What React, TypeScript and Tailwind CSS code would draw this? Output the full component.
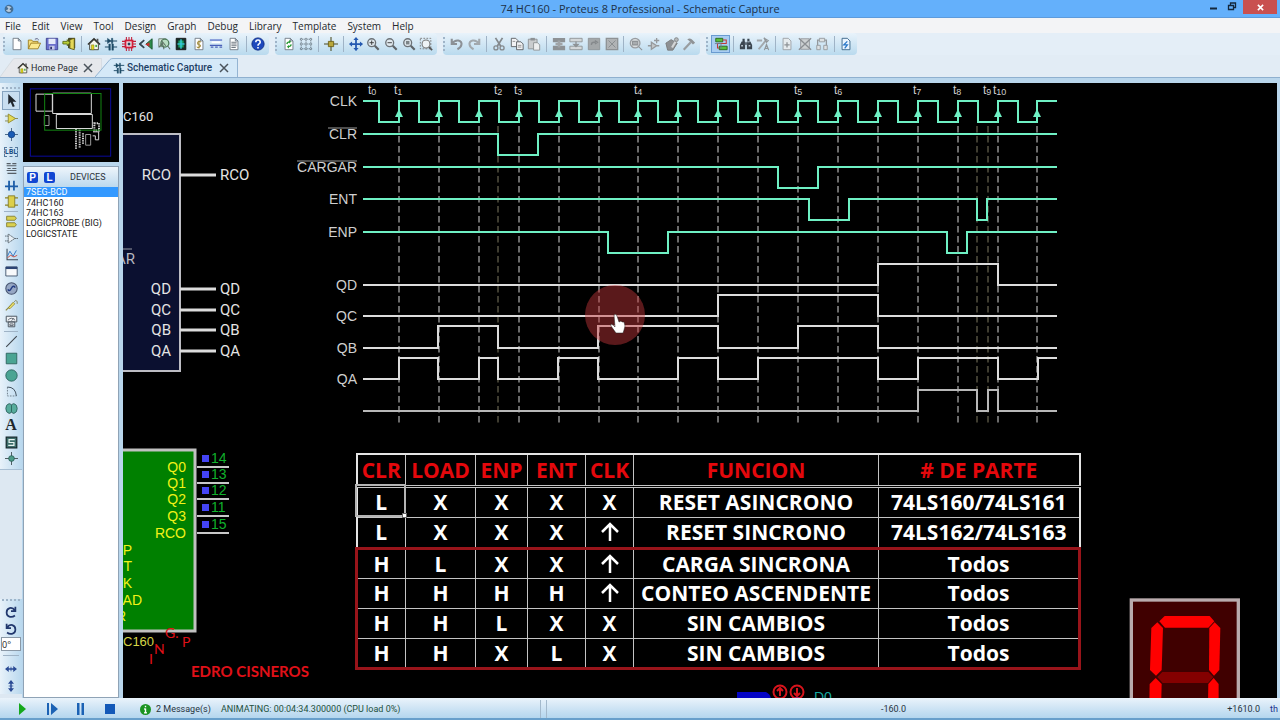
import React from 'react'
import type { ReactNode } from 'react'

const GREEN = '#6ff0c4'
const WHITE = '#dcdcdc'

/* ---------- small drawings, all on a 16x16 grid ---------- */

const page = <path d="M3.5 1.5h6l3 3v10h-9zM9.5 1.5v3h3" fill="#fff" stroke="#6d7680" />
const lens = <><circle cx="6.500" cy="6.500" r="4.500" fill="#dfe8ee" stroke="#6c7277" strokeWidth="1.500" /><path d="M10 10l4.500 4.500" stroke="#5f6468" strokeWidth="2.500" /></>
const house = (
    <>
        <path d="M3 8v6.500h10V8L8 3z" fill="#f7f7ea" stroke="#3a3a34" />
        <path d="M1 8.500L8 2l7 6.500" fill="none" stroke="#2d2d28" strokeWidth="1.500" />
        <path d="M11 2h2v4l-2-2z" fill="#555" />
        <path d="M5 9h3v5.500H5z" fill="#e0d61c" stroke="#6a6410" strokeWidth=".5" />
        <path d="M9.500 9h2v2.500h-2z" fill="#4aa84a" />
    </>
)
const schematic = (
    <g stroke="#1d4a66" fill="#1d4a66">
        <path d="M1 4.500h14M1 11.500h5M10 11.500h5" strokeWidth="1.200" />
        <path d="M4 1.500v6l4-3zM8.500 1.500h1.500v6H8.500zM5.500 8h1.800v7H5.500zM9 8h1.800v7H9z" strokeWidth=".5" />
    </g>
)

const icons: Record<string, ReactNode> = {
    new: page,
    open: <><path d="M1.500 13.500v-10h4l1 1.500h6v2" fill="#f5df7c" stroke="#9b7c1d" /><path d="M1.500 13.500l3-6.500h11l-3 6.500z" fill="#fbe98f" stroke="#9b7c1d" /><path d="M9 2.500q3-2 4.500 1" fill="none" stroke="#557" /></>,
    save: <><path d="M1.500 1.500h13v13h-13z" fill="#6b70cc" stroke="#383d8c" /><path d="M4 2h8v6H4z" fill="#e5eafa" /><path d="M5 10h6v4.500H5z" fill="#c7cbe8" /><path d="M6 11h2v3H6z" fill="#2d3170" /></>,
    exit: <><path d="M7.500 1.500h7v11h-7z" fill="#51532c" stroke="#333415" /><path d="M9 3l5-1.500v13L9 13z" fill="#e4d858" stroke="#5e5812" /><path d="M1 5h5V3l3 3.500-3 3.500V8H1z" fill="#b9cf38" stroke="#5a6a10" /></>,
    home: house,
    schematic,
    pcb: <><path d="M5 0v16M8 0v16M11 0v16M0 5h16M0 8h16M0 11h16" stroke="#c0203a" strokeWidth="1.200" /><path d="M3 3h10v10H3z" fill="#cf1d39" /><path d="M5 5h6v6H5z" fill="#f3e6ea" /><path d="M6.500 6.500h3v3h-3z" fill="#27455f" /></>,
    view3d: <><path d="M15 2v12L8 8z" fill="#2c8c4a" stroke="#16552a" /><path d="M6 3.500L1 8l5 4.500" fill="none" stroke="#34454f" strokeWidth="2" /><path d="M12 6v5L7 8.500z" fill="#c63030" /></>,
    gerber: <><path d="M2 2h8v9H2z" fill="#d6e6d9" stroke="#6c7d70" /><circle cx="9" cy="7" r="4.500" fill="#b8ddc2" stroke="#4e7a5b" strokeWidth="1.500" /><path d="M12 10l3 4M2 12l4-5 2 7M5 4l5 6" stroke="#5c6f62" fill="none" strokeWidth="1.200" /></>,
    design: <><path d="M2.500 1.500h11v13h-11z" fill="#152b26" stroke="#111" /><path d="M5 4h6v3H5zM5 9h6v3H5z" fill="#18a36a" /><path d="M8 2.500v11M4 8h8" stroke="#36d2e0" strokeWidth="1.500" /></>,
    bill: <>{page}<path d="M10 6q-1-1.500-2.500-1T6.500 8l2.500 1q1.500 1-.5 2.500T5.500 11M8 4v9" fill="none" stroke="#a08a38" strokeWidth="1.200" /></>,
    bus: <><path d="M1 3.500h14" stroke="#7a8fd4" strokeWidth="2" /><path d="M1 9.500h14M2 11.500h3M7 11.500h3M12 11.500h3" stroke="#4a60b8" strokeWidth="1.500" /><path d="M3 6h10" stroke="#fff" strokeWidth="2" /></>,
    notes: <>{page}<path d="M5 6h6M5 8h6M5 10h6M5 12h5" stroke="#5d6670" /></>,
    help: <><circle cx="8" cy="8" r="7" fill="#1e49bd" stroke="#0e2a80" /><path d="M5.500 6q0-2.500 2.500-2.500T10.500 6q0 1.200-1.300 1.900T8 10M8 11.500v1.500" fill="none" stroke="#fff" strokeWidth="1.800" /></>,
    redraw: <>{page}<path d="M5.500 8q.5-2.500 3-2.500M10.500 8.500q-.5 2.500-3 2.500" fill="none" stroke="#279a34" strokeWidth="1.500" /><path d="M8 3.500l2.500 2L8 7.500zM8 9l-2.500 2L8 13z" fill="#279a34" /></>,
    grid: <path d="M2.500 1v14M8 1v14M13.500 1v14M1 2.500h14M1 8h14M1 13.500h14" stroke="#4d5963" strokeDasharray="1.500 1" />,
    origin: <><path d="M8 0v16M0 8h16" stroke="#4b4b20" strokeWidth="1.200" /><path d="M5 5h6v6H5z" fill="#b9a73a" stroke="#6c6018" /></>,
    pan: <><path d="M8 1v14M1 8h14" stroke="#2559b0" strokeWidth="2" /><path d="M8 0l3 3.500H5zM8 16l3-3.500H5zM0 8l3.500-3v6zM16 8l-3.500-3v6z" fill="#2559b0" /></>,
    zoomIn: <>{lens}<path d="M4 6.500h5M6.500 4v5" stroke="#333" /></>,
    zoomOut: <>{lens}<path d="M4 6.500h5" stroke="#333" /></>,
    zoomAll: <>{lens}<path d="M4.500 4.500h4v4h-4z" fill="#7c8488" /></>,
    zoomArea: <><path d="M1.500 1.500h12v12h-12z" fill="none" stroke="#777" strokeDasharray="2 1.500" /><circle cx="8" cy="8" r="4.500" fill="#eef3f6" stroke="#777" strokeWidth="1.200" /><path d="M11.500 11.500l3.500 3.500" stroke="#555" strokeWidth="2" /></>,
    undo: <path d="M2 2v6h6M2.500 7.500q2.500-4 7-3.500 4.500 1 3.500 5-.5 3-4.500 5" fill="none" stroke="#8c9196" strokeWidth="2.400" />,
    redo: <path d="M14 2v6H8M13.500 7.500q-2.500-4-7-3.500-4.500 1-3.500 5 .5 3 4.500 5" fill="none" stroke="#a2a8ad" strokeWidth="2.400" />,
    cut: <><path d="M4 1l6 9.500M12 1L6 10.500" stroke="#84898d" strokeWidth="2" /><circle cx="4.500" cy="12.500" r="2.300" fill="none" stroke="#84898d" strokeWidth="1.500" /><circle cx="11.500" cy="12.500" r="2.300" fill="none" stroke="#84898d" strokeWidth="1.500" /></>,
    copy: <><path d="M1.500 1.500h5l2.500 2.500v7H1.500z" fill="#f2f3f5" stroke="#55595e" /><path d="M7.500 5.500h5l2.500 2.500v6.500H7.500z" fill="#f2f3f5" stroke="#55595e" /><path d="M9 9.500h4M9 11.500h4M3 5h3" stroke="#888" /></>,
    paste: <><path d="M1.500 2.500h10v11h-10z" fill="#c9ccce" stroke="#8d9194" /><path d="M4 1h5v3H4z" fill="#8d9194" /><path d="M7.500 6.500h4.500l2.500 2.500v6h-7z" fill="#eceeef" stroke="#8d9194" /></>,
    blockCopy: <><path d="M1 1h14v5H1zM1 10h14v5H1z" fill="#8e9295" /><path d="M8 4v8M4 8h8" stroke="#a0a4a7" strokeWidth="3" /></>,
    blockMove: <><path d="M1 1.500h14v4H1zM1 10.500h14v4H1z" fill="#d3d7d9" stroke="#8e9295" /><path d="M8 5v4M5.500 8.500h5L8 11z" stroke="#8e9295" strokeWidth="1.500" fill="#8e9295" /></>,
    blockRotate: <><path d="M1.500 1.500h13v13h-13z" fill="#a3a7a9" stroke="#8e9295" /><path d="M5 9q0-3 3-3h2M9 4l3 2-3 2" stroke="#85898c" fill="none" strokeWidth="1.500" /></>,
    blockDelete: <><path d="M1.500 1.500h13v13h-13z" fill="#b0b3b5" stroke="#8e9295" strokeWidth="1.500" /><path d="M4 4l8 8M12 4l-8 8" stroke="#85898c" /></>,
    pick: <><circle cx="7" cy="7" r="5.500" fill="#d8dcde" stroke="#989ca0" strokeWidth="1.500" /><path d="M4 5h6v4H4zM11 11l4 4" fill="#a8acaf" stroke="#8f9396" strokeWidth="1.200" /></>,
    make: <path d="M1 10h4M10 10h4M5 6v8l6-4zM11 1v6M8 4h6" fill="#c4c8ca" stroke="#96999c" strokeWidth="1.500" />,
    pack: <><path d="M1 7l6-4 7 4-5 8H3z" fill="#8d9093" stroke="#777" /><path d="M8 12L14 2" stroke="#d3d5d6" strokeWidth="2.500" /><circle cx="13" cy="3" r="2.200" fill="#b5b8ba" stroke="#808386" /></>,
    hammer: <><path d="M2 14.500L10 6" stroke="#999da0" strokeWidth="2.500" /><path d="M6 2.500q4-2 6 1l3 3-2.500 2L10 6z" fill="#8f9396" /></>,
    wire: <><path d="M2 1.500h8v4H2zM6 10.500h9v4H6z" fill="#59c03a" stroke="#276418" /><path d="M10 3.500h4v4H4v5h2" fill="none" stroke="#c03a3a" strokeWidth="1.200" /><path d="M1 7.500h7v6" fill="none" stroke="#6b7c94" /></>,
    find: <><path d="M4 2h2.500v4H4zM9.500 2H12v4H9.500zM3 5h4v9H1V9zM13 5H9v9h6V9z" fill="#3b4650" /><path d="M6.500 6h3v3h-3z" fill="#5e6c78" /><path d="M2.500 10h2M11 10h2" stroke="#bcc9d3" strokeWidth="1.500" /></>,
    property: <><path d="M1 4h6M3 14L12 3" stroke="#a3a8ac" strokeWidth="2.200" /><path d="M9 1l5 3-2 2zM9.500 15l2.500-6.500L14.500 15M10.500 13h3" fill="none" stroke="#91969a" strokeWidth="1.300" /></>,
    addSheet: <><path d="M3.500 1.500h6l3 3v10h-9z" fill="#e6ebee" stroke="#999ea2" /><path d="M8 6v6M5 9h6" stroke="#8e9397" strokeWidth="1.500" /></>,
    delSheet: <><path d="M3 2h10v12H3z" fill="#cdd1d3" stroke="#92969a" /><path d="M1 1.500l14 13M15 1.500l-14 13" stroke="#8b8f93" strokeWidth="1.500" /></>,
    hierarchy: <><path d="M2 9.500h4v5H2zM10 9.500h4v5h-4zM5 1.500h6v4H5z" fill="#dde1e3" stroke="#93989c" /><path d="M5 3.500H3v6M11 3.500h2v6" fill="none" stroke="#93989c" strokeWidth="1.500" /></>,
    erc: <><path d="M3.500 1.500h6l3 3v10h-9z" fill="#e9f4ff" stroke="#356084" /><path d="M9.500 5l-4 4h4l-3 4" fill="none" stroke="#2977c8" strokeWidth="1.500" /></>,

    select: <path d="M4 0v13l3-3 2.500 6 2.500-1-2.500-5.500H14z" fill="#20262c" />,
    component: <><path d="M0 5h4M0 11h4M12 8h4" stroke="#7b7b3a" /><path d="M4 2.500v11L13 8z" fill="#e3d954" stroke="#8a8222" /></>,
    junction: <><path d="M8 0v16M0 8h16" stroke="#4c6a88" strokeWidth="1.200" /><circle cx="8" cy="8" r="4" fill="#1a5bb5" stroke="#133f80" /></>,
    script: <path d="M2 2h5M9 2h5M2 4.500h12M3 8h4M9 8h5M2 10.500h12M3 14h11" stroke="#565e66" strokeWidth="1.300" />,
    busMode: <path d="M0 9h16M5 2v12M11 2v12" stroke="#1c5da8" strokeWidth="2.200" />,
    subcircuit: <><path d="M0 3.500h16M0 12.500h16" stroke="#8b842a" strokeWidth="1.500" /><path d="M4 1h8v14H4z" fill="#dccf4a" stroke="#7c7420" /></>,
    terminal: <><path d="M2 1.500h10l2 2.500-2 2.500H2zM2 9.500h10l2 2.500-2 2.500H2z" fill="#d9d050" stroke="#7d7628" /></>,
    pin: <path d="M0 5h4M0 11h4M4 2.500v11L12 8zM12 8h4" fill="#e7eff5" stroke="#4c5760" strokeDasharray="2 .5" />,
    graph: <><path d="M2.500 1v13.500H16" fill="none" stroke="#3b4a58" strokeWidth="1.300" /><path d="M3 10l3-6 4 6 4-7" fill="none" stroke="#3277c4" strokeWidth="1.200" /><path d="M3 12l4-3 4 2 4-2" fill="none" stroke="#c85046" strokeWidth="1.200" /></>,
    popup: <><path d="M1 2.500h14v11H1z" fill="#f7f9fb" stroke="#30425c" /><path d="M1 2h14v3H1z" fill="#2c4474" /></>,
    generator: <><circle cx="8" cy="8" r="7" fill="#96a7c4" stroke="#46536e" strokeWidth="1.300" /><path d="M3.500 9q1.500 3 3.500 0l2-3q2-2 3.500 1" fill="none" stroke="#243d82" strokeWidth="1.800" /></>,
    probe: <><path d="M1 14l4-4 5-5" fill="none" stroke="#8d8742" strokeWidth="1.500" /><path d="M4 11l6-7 2 2-6 6z" fill="#ece06a" stroke="#8f8832" /><path d="M11 4q2-4 4-1v3" fill="none" stroke="#7c7b50" /></>,
    meter: <><path d="M1.500 1.500h13v7h-13zM4 8.500h8v6H4z" fill="#eef1f4" stroke="#4b5560" strokeWidth="1.200" /><path d="M3.500 6.500q4.500-5 9 0M8 7l3-3M6 11h4v2H6z" fill="none" stroke="#4b5560" /></>,
    line: <path d="M1.500 14.500l13-13" stroke="#3f464d" strokeWidth="1.300" />,
    box: <path d="M1.500 1.500h13v13h-13z" fill="#4aa493" stroke="#265a55" />,
    circle: <circle cx="8" cy="8" r="7" fill="#4aa493" stroke="#265a55" />,
    arc: <><path d="M3 2.500v11h11" fill="none" stroke="#5d6b78" strokeDasharray="2 1.500" /><path d="M3 2.500q10 0 11 11" fill="none" stroke="#41505e" strokeWidth="1.200" /></>,
    path: <path d="M5 2q2.500 0 3 2 .5-2 3-2 4 1 4 6t-4 6q-2.500 0-3-2-.5 2-3 2-4-1-4-6t4-6zM8 4v8" fill="#57ac9c" stroke="#265a55" />,
    symbol: <><path d="M1.500 1.500h13v13h-13z" fill="#3e6f6c" stroke="#15292c" strokeWidth="1.500" /><path d="M12 4.500H5v3.500h6v3.500H4" fill="none" stroke="#e6f3f0" strokeWidth="1.500" /></>,
    marker: <><path d="M8 0v16M0 8h16" stroke="#4d5a60" strokeWidth="1.200" /><circle cx="8" cy="8" r="3.500" fill="#4c9c88" stroke="#265a55" /></>,
    rotateCw: <path d="M13 2v5H8M12.500 6.500Q10 2.500 6.500 3.500 3 4.500 3 8.500T7 13.500q3 .5 5.500-1.500" fill="none" stroke="#22386e" strokeWidth="2" />,
    rotateCcw: <path d="M3 2v5h5M3.500 6.500Q6 2.500 9.500 3.500 13 4.500 13 8.500T9 13.500q-3 .5-5.500-1.500" fill="none" stroke="#22386e" strokeWidth="2" />,
    mirrorX: <><path d="M2 8h12" stroke="#2a4a94" strokeWidth="2" /><path d="M0 8l5-4v8zM16 8l-5-4v8z" fill="#2a4a94" /><path d="M8 5v6" stroke="#2a4a94" /></>,
    mirrorY: <><path d="M8 2v12" stroke="#2a4a94" strokeWidth="2" /><path d="M8 0L4 5h8zM8 16l-4-5h8z" fill="#2a4a94" /><path d="M5 8h6" stroke="#2a4a94" /></>,
}

const Glyph = ({ name, className = 'w-[14px] h-[14px]' }: { name: string, className?: string }) => (
    <svg viewBox="0 0 16 16" className={`shrink-0 ${className}`} aria-hidden="true">{icons[name]}</svg>
)

const Grip = ({ wide }: { wide?: boolean }) => (
    <div className={`shrink-0 border-[#9fb4c8] border-dotted ${wide ? 'h-[3px] border-t-2 mx-0.5' : 'w-[3px] border-l-2 my-1'}`} />
)

const ToolStrip = ({ items, className }: { items: string[], className: string }) => (
    <div className={`flex items-stretch h-[22px] rounded-sm bg-linear-to-b from-[#e9f3fb] to-[#b9daee] ${className}`}>
        <Grip />
        <div className="flex flex-1 items-center px-0.5">
            {items.map((name, i) => name === '|'
                ? <div key={i} className="w-[7px] h-4 shrink-0 flex justify-center"><span className="w-px bg-[#9fb3c6]" /></div>
                : (
                    <button key={i} aria-label={name} className={`flex-1 h-[18px] flex items-center justify-center ${name === 'wire' ? 'bg-[#a9cdf2] border border-[#6a9bd0]' : ''}`}>
                        <Glyph name={name} />
                    </button>
                ))}
        </div>
    </div>
)

const bars = [
    { className: 'w-[266px]', items: ['new', 'open', 'save', 'exit', '|', 'home', 'schematic', 'pcb', 'view3d', 'gerber', 'design', 'bill', 'bus', 'notes', '|', 'help'] },
    { className: 'w-[162px]', items: ['redraw', 'grid', '|', 'origin', '|', 'pan', 'zoomIn', 'zoomOut', 'zoomAll', 'zoomArea'] },
    { className: 'w-[257px]', items: ['undo', 'redo', '|', 'cut', 'copy', 'paste', '|', 'blockCopy', 'blockMove', 'blockRotate', 'blockDelete', '|', 'pick', 'make', 'pack', 'hammer'] },
    { className: 'w-[151px]', items: ['wire', '|', 'find', 'property', '|', 'addSheet', 'delSheet', 'hierarchy', '|', 'erc'] },
]

const modes = [
    'select', 'component', 'junction', 'label', 'script', 'busMode', 'subcircuit', '|',
    'terminal', 'pin', 'graph', 'popup', 'generator', 'probe', 'meter', '|',
    'line', 'box', 'circle', 'arc', 'path', 'text', 'symbol', 'marker',
]

const menus = ['File', 'Edit', 'View', 'Tool', 'Design', 'Graph', 'Debug', 'Library', 'Template', 'System', 'Help']

const TitleBar = () => (
    <header className="relative flex items-center justify-center h-[18px] shrink-0 bg-[#64b0fb] border-b border-[#5d9bdc] text-[11px] leading-4 text-[#1d3148]">
        <svg viewBox="0 0 16 16" className="absolute left-1 top-1 w-2.5 h-2.5"><circle cx="8" cy="8" r="7" fill="#456f96" /><path d="M4 4q5-2 8 2-4 1-3 3 3 0 2 3-5 2-8-2 4-1 4-3z" fill="#b7cadd" /></svg>
        <h1>74 HC160 - Proteus 8 Professional - Schematic Capture</h1>
        <div className="absolute right-[3px] top-0 flex h-[14px] items-center">
            <button aria-label="Minimize" className="w-4 h-full"><svg viewBox="0 0 16 14" className="w-4 h-[14px]"><path d="M0 8.500h7" stroke="#14283c" strokeWidth="2" /></svg></button>
            <button aria-label="Restore" className="w-[17px] h-full"><svg viewBox="0 0 17 14" className="w-[17px] h-[14px]"><path d="M2.500 5.500h5v4h-5zM4.500 5V3h5v4.500H8" fill="none" stroke="#14283c" strokeWidth="1.300" /></svg></button>
            <button aria-label="Close" className="w-[34px] h-full bg-[#c9504f] flex items-center justify-center"><svg viewBox="0 0 8 8" className="w-[7px] h-[7px]"><path d="M1 1l6 6M7 1L1 7" stroke="#fff" strokeWidth="1.800" /></svg></button>
        </div>
    </header>
)

const Tab = ({ icon, title, active }: { icon: string, title: string, active?: boolean }) => (
    <div className={`relative flex items-center h-[19px] ${active ? 'w-[143px] -ml-[7px] pl-[18px] text-[#1d3f66]' : 'w-[102px] pl-[17px] text-[#25292e]'}`}>
        <svg viewBox="0 0 143 19" preserveAspectRatio="none" className="absolute inset-0 w-full h-full" aria-hidden="true">
            <path d={active ? 'M0 19L15 1.500Q16 .5 18 .5H142.500V19' : 'M0 19L18 1.500Q19 .5 21 .5H142.500V19'} fill={active ? '#d5e9f8' : '#e6e8ec'} stroke={active ? '#94b4d2' : '#d2d9e0'} />
        </svg>
        <Glyph name={icon} className="relative w-3 h-3" />
        <button className={`relative ml-[2px] leading-3 whitespace-nowrap ${active ? 'text-[10px] font-medium' : 'text-[9px]'}`}>{title}</button>
        <button aria-label={`Close ${title}`} className="relative ml-auto mr-[9px]">
            <svg viewBox="0 0 10 10" className="w-2.5 h-2.5"><path d="M1 1l8 8M9 1L1 9" stroke="#4b535b" strokeWidth="1.500" /></svg>
        </button>
    </div>
)

const ModeBar = () => (
    <aside className="w-[22px] shrink-0 flex flex-col bg-[#dde8f2]">
        <div className="flex flex-col h-[387px] bg-linear-to-r from-[#e8f2fa] to-[#b9d8ee] border-b border-[#a8bfd4]">
            <div className="h-2 pt-1"><Grip wide /></div>
            <div className="flex flex-col h-[376px]">
                {modes.map((name, i) => {
                    if (name === '|') return <div key={i} className="h-[3px] shrink-0 mx-1"><div className="h-px mt-px bg-[#9fb3c6]" /></div>
                    return (
                        <button key={i} aria-label={name} className={`flex-1 min-h-0 mx-0.5 flex items-center justify-center ${i === 0 ? 'bg-[#c8def0] border border-[#86a4c0]' : ''}`}>
                            {name === 'label' && <span className="border border-dashed border-[#55789c] text-[7px] leading-2 font-bold text-[#1e4f86]">LBL</span>}
                            {name === 'text' && <span className="font-['Liberation_Serif',serif] text-[16px] leading-4 font-bold text-[#20282e]">A</span>}
                            {name !== 'label' && name !== 'text' && <Glyph name={name} className="w-[13px] h-[13px]" />}
                        </button>
                    )
                })}
            </div>
        </div>
        <div className="mt-auto mb-1 flex flex-col items-center bg-linear-to-r from-[#e8f2fa] to-[#b9d8ee]">
            <div className="w-full h-1"><Grip wide /></div>
            <button aria-label="Rotate clockwise" className="h-[17px]"><Glyph name="rotateCw" className="w-3.5 h-3.5" /></button>
            <button aria-label="Rotate anti-clockwise" className="h-[17px]"><Glyph name="rotateCcw" className="w-3.5 h-3.5" /></button>
            <input aria-label="Angle" defaultValue="0°" className="w-5 h-[14px] bg-white border border-[#8a98a6] text-[9px] leading-3 text-[#222]" />
            <div className="w-4 h-px my-1 bg-[#9fb3c6]" />
            <button aria-label="Mirror horizontally" className="h-[17px]"><Glyph name="mirrorX" className="w-3 h-3" /></button>
            <button aria-label="Mirror vertically" className="h-[17px]"><Glyph name="mirrorY" className="w-3 h-3" /></button>
        </div>
    </aside>
)

const devices = ['7SEG-BCD', '74HC160', '74HC163', 'LOGICPROBE (BIG)', 'LOGICSTATE']

const DevicePanel = () => (
    <section className="w-[96px] shrink-0 flex flex-col text-[9px] leading-[10px] font-[Roboto,'Liberation_Sans',sans-serif]">
        <svg viewBox="70 10 288 236" className="w-full h-[79px] shrink-0 bg-black">
            <rect x="92" y="27" width="241" height="202" fill="none" stroke="#0a0a9c" strokeWidth="3" />
            <g fill="none" stroke="#d8d8d8" strokeWidth="3">
                <path d="M109 43h49v51h-49zM159 40h116v61H159zM170 104h108v42H170z" />
                <path d="M134 107h14v30h-14zM258 164h15v32h-15z" stroke="#999" />
                <path d="M229 147v62M240 150v56M250 160v35M284 130h14v22h-14z" strokeDasharray="4 3" strokeWidth="6" />
                <path d="M280 156h17v24h-10v-12h-8" />
            </g>
            <rect x="135" y="41" width="169" height="110" fill="none" stroke="#128512" strokeWidth="3" />
        </svg>
        <div className="mt-1 flex-1 flex flex-col bg-white border border-[#8fa3b6]">
            <div className="flex items-center h-[20px] pl-[3px] bg-linear-to-b from-[#eef5fb] to-[#bcd9ee]">
                <button className="w-[11px] h-[11px] rounded-[2px] bg-[#1146d2] text-white text-[10px] leading-[11px] font-bold font-['Liberation_Sans',sans-serif]">P</button>
                <button className="w-[11px] h-[11px] ml-[6px] rounded-[2px] bg-[#1146d2] text-white text-[10px] leading-[11px] font-bold font-['Liberation_Sans',sans-serif]">L</button>
                <h2 className="ml-[15px] text-[#2c333a]">DEVICES</h2>
            </div>
            <ul className="flex flex-col h-[52px]">
                {devices.map((d, i) => (
                    <li key={d} className={`flex-1 min-h-0 flex items-center px-0.5 ${i === 0 ? 'bg-[#3399ff] text-white' : 'text-[#1c1c1c]'}`}>
                        <button className="whitespace-nowrap">{d}</button>
                    </li>
                ))}
            </ul>
        </div>
    </section>
)

/* ---------- timing diagram ---------- */

const START = 363
const END = 1057
const edges = Array.from({ length: 17 }, (_, i) => Math.round(399 + i * 39.9))

// square wave that starts at `first` and toggles between the two levels at every x
const wave = (first: number, second: number, xs: number[]) => {
    let level = first
    let d = `M${START} ${first}`
    xs.forEach(x => {
        level = level === first ? second : first
        d += `H${x}V${level}`
    })
    return d + `H${END}`
}

const signals = [
    { name: 'CLK', y: 101, d: wave(101, 122, [379, ...edges.flatMap(x => [x, x + 20])].slice(0, -1)), color: GREEN },
    { name: 'CLR', y: 134, d: wave(134, 155, [498, 538]), color: GREEN, over: 29 },
    { name: 'CARGAR', y: 167, d: wave(167, 188, [778, 818]), color: GREEN, over: 60 },
    { name: 'ENT', y: 199, d: wave(199, 220, [809, 849, 977, 987]), color: GREEN },
    { name: 'ENP', y: 232, d: wave(232, 253, [608, 668, 947, 967]), color: GREEN },
    { name: 'QD', y: 285, d: wave(285, 264, [878, 998]), color: WHITE },
    { name: 'QC', y: 316, d: wave(316, 295, [718, 878]), color: WHITE },
    { name: 'QB', y: 348, d: wave(348, 326, [438, 498, 598, 718, 798, 878]), color: WHITE },
    { name: 'QA', y: 379, d: wave(379, 358, [399, 438, 479, 498, 558, 598, 678, 718, 758, 878, 918, 998, 1038]), color: WHITE },
    { name: '', y: 411, d: wave(411, 390, [918, 977, 988, 998]), color: '#b8b8b8' },
]

const marks = [368, 394, 494, 514, 634, 794, 834, 913, 953, 983, 993]

const TimingDiagram = () => (
    <g className="font-['Liberation_Sans',Arial,sans-serif]">
        {edges.map(x => <path key={x} d={`M${x} 126V424`} stroke="#8f8f8f" strokeDasharray="6.500 3.500" strokeWidth="1.500" />)}
        {[498, 977, 988].map(x => <path key={x} d={`M${x} 126V424`} stroke="#7c7860" strokeDasharray="6.500 3.500" />)}
        {signals.map(s => (
            <g key={s.y}>
                <text x="357" y={s.y + 5} textAnchor="end" fontSize="14" fill="#cfcfcf">{s.name}</text>
                {s.over && <path d={`M${357 - s.over} ${s.y - 6}h${s.over}`} stroke="#9a9a9a" />}
                <path d={s.d} fill="none" stroke={s.color} strokeWidth="2" />
            </g>
        ))}
        {edges.map(x => <path key={x} d={`M${x} 109l4 8h-8z`} fill={GREEN} />)}
        {marks.map((x, i) => (
            <text key={x} x={x} y="94" fontSize="12" fill="#cfcfcf">t<tspan fontSize="9" dy="1">{i}</tspan></text>
        ))}
    </g>
)

/* ---------- parts on the sheet ---------- */

const Counter = () => (
    <g className="font-[Roboto,'Liberation_Sans',sans-serif]" fontSize="15" fill="#e4e4e4">
        <text x="123" y="121" fontSize="13">C160</text>
        <rect x="100" y="134" width="80" height="237" fill="#0b1030" stroke="#bdbdc4" strokeWidth="2" />
        <text x="135" y="264" textAnchor="end" fill="#b8b8c0">AR</text>
        <path d="M120 249h12" stroke="#9a9aa2" />
        {([['RCO', 175], ['QD', 289], ['QC', 310], ['QB', 330], ['QA', 351]] as [string, number][]).map(([name, y]) => (
            <g key={name}>
                <text x="171" y={y + 5} textAnchor="end">{name}</text>
                <path d={`M180 ${y}h36`} stroke="#dcdcdc" strokeWidth="3" />
                <text x="220" y={y + 5}>{name}</text>
            </g>
        ))}
    </g>
)

const outputs: [string, string, number][] = [['Q0', '14', 467], ['Q1', '13', 483], ['Q2', '12', 499], ['Q3', '11', 516], ['RCO', '15', 533]]
const inputs: [string, number, number][] = [['P', 132, 555], ['T', 132, 571], ['K', 132, 588], ['AD', 142, 605], ['R', 126, 621]]

const GreenChip = () => (
    <g className="font-['Liberation_Sans',Arial,sans-serif]" fontSize="14">
        <rect x="100" y="450" width="95" height="181" fill="#008000" stroke="#c0c0c0" strokeWidth="3" />
        {outputs.map(([name, pin, y]) => (
            <g key={name}>
                <text x="186" y={y + 5} textAnchor="end" fill="#f2f218">{name}</text>
                <rect x="202" y={y - 12} width="7" height="7" fill="#4444f4" />
                <text x="211" y={y - 4} fill="#10b02c">{pin}</text>
                <path d={`M197 ${y}h32`} stroke="#c8c8c8" strokeWidth="2" />
            </g>
        ))}
        {inputs.map(([name, x, y]) => <text key={name} x={x} y={y} textAnchor="end" fill="#f2f218">{name}</text>)}
        <text x="123" y="646" fontSize="13" fill="#d6d648">C160</text>
    </g>
)

const Signature = () => (
    <g className="font-[Lato,'Open_Sans',sans-serif]" fill="#e01018" fontWeight="700">
        <g fontSize="14" fontWeight="400">
            <text x="165" y="638">G.</text>
            <text x="182" y="647">P</text>
            <text x="154" y="654">N</text>
            <text x="149" y="664">I</text>
        </g>
        <text x="191" y="677" fontSize="15">EDRO CISNEROS</text>
    </g>
)

const SevenSegment = () => (
    <g transform="translate(1100 580) scale(.3333)">
        <rect x="94" y="60" width="321" height="500" fill="#400000" stroke="#b9abad" strokeWidth="10" />
        <g fill="#ff0000">
            <path d="M178 124l16-16h135l14 16-18 19H195z" />
            <path d="M172 127l17 17-4 126-17 17-18-17 4-126z" />
            <path d="M344 127l17 17-3 126-16 17-15-17 1-126z" />
            <path d="M167 294l18 18-3 120h-35l2-120z" />
            <path d="M341 294l15 18v120h-33l2-120z" />
        </g>
        <path d="M172 291l15-15h138l15 15-16 18H188z" fill="#840000" />
    </g>
)

const Probes = () => (
    <g>
        <path d="M737 692h29q6 3 5 10h-34z" fill="#0404c4" />
        <path d="M792 697h8v3h-8z" fill="#3c3cf0" />
        <g fill="none" stroke="#d8141c" strokeWidth="2">
            <circle cx="780" cy="692" r="6.500" />
            <circle cx="797" cy="692" r="6.500" />
            <path d="M780 696v-7M777 691l3-3 3 3M797 688v7M794 693l3 3 3-3" />
        </g>
        <text x="814" y="702" fontSize="14" fill="#16a8a0" className="font-['Liberation_Sans',Arial,sans-serif]">D0</text>
    </g>
)

const Pointer = () => (
    <g>
        <circle cx="615" cy="315" r="30" fill="#c8383c" fillOpacity=".45" />
        <path d="M614 315q2-2 3 1l2 6 2-1 1 1 2 0 1 4-1 4-1 3h-7l-5-7q-1-3 2-1l2 2z" fill="#fff" stroke="#222" strokeWidth=".5" />
    </g>
)

/* ---------- truth table ---------- */

const heads = [
    { text: 'CLR', width: 'w-[49px]' },
    { text: 'LOAD', width: 'w-[70px]' },
    { text: 'ENP', width: 'w-[52px]' },
    { text: 'ENT', width: 'w-[58px]' },
    { text: 'CLK', width: 'w-[48px]' },
    { text: 'FUNCION', width: 'w-[245px]' },
    { text: '# DE PARTE', width: 'w-[201px]' },
]

const resetRows = [
    ['L', 'X', 'X', 'X', 'X', 'RESET ASINCRONO', '74LS160/74LS161'],
    ['L', 'X', 'X', 'X', '↑', 'RESET SINCRONO', '74LS162/74LS163'],
]

const countRows = [
    ['H', 'L', 'X', 'X', '↑', 'CARGA SINCRONA', 'Todos'],
    ['H', 'H', 'H', 'H', '↑', 'CONTEO ASCENDENTE', 'Todos'],
    ['H', 'H', 'L', 'X', 'X', 'SIN CAMBIOS', 'Todos'],
    ['H', 'H', 'X', 'L', 'X', 'SIN CAMBIOS', 'Todos'],
]

const Arrow = () => (
    <svg viewBox="0 0 20 20" className="mx-auto w-5 h-5" role="img" aria-label="rising edge">
        <path d="M10 19V3M2 10l8-8 8 8" fill="none" stroke="#fff" strokeWidth="2.500" />
    </svg>
)

const Rows = ({ rows, height }: { rows: string[][], height: string }) => rows.map((row, r) => (
    <tr key={r} className={height}>
        {row.map((cell, c) => <td key={c} className="border border-[#c4c4c4] p-0 whitespace-nowrap">{cell === '↑' ? <Arrow /> : cell}</td>)}
    </tr>
))

const TruthTable = () => (
    <div className="absolute left-[232px] top-[370px]">
        <table className="table-fixed w-[725px] border-collapse border-2 border-[#e4e4e4] text-center text-[21px] leading-6 font-bold text-white font-['Open_Sans','Noto_Sans',sans-serif]">
            <thead>
                <tr className="h-[32px] text-[#e4080c]">
                    {heads.map(h => <th key={h.text} className={`${h.width} border border-b-[3px] border-[#c4c4c4] [border-bottom-style:double] p-0 whitespace-nowrap`}>{h.text}</th>)}
                </tr>
            </thead>
            <tbody><Rows rows={resetRows} height="h-[31px]" /></tbody>
            <tbody className="border-[3px] border-[#98141a]"><Rows rows={countRows} height="h-[30px]" /></tbody>
        </table>
        {/* spreadsheet cell selection */}
        <div className="absolute left-0 top-[31px] w-[51px] h-[33px] border-2 border-[#b4b4b4]">
            <span className="absolute -right-[3px] -bottom-[3px] w-[5px] h-[5px] bg-white border border-[#666]" />
        </div>
    </div>
)

const Sheet = () => (
    <main className="relative flex-1 min-w-0 ml-1 mr-[3px] overflow-hidden bg-black">
        <svg viewBox="123 83 1154 615" className="absolute left-0 top-0 w-[1154px] h-[615px]">
            <Counter />
            <GreenChip />
            <Signature />
            <TimingDiagram />
            <SevenSegment />
            <Probes />
            <Pointer />
        </svg>
        <TruthTable />
    </main>
)

const StatusBar = () => (
    <footer className="flex items-center h-[22px] pt-[2px] shrink-0 bg-linear-to-b from-[#eaf3fb] to-[#b4d6ee] border-b-2 border-[#689fcb] text-[9px] leading-3 text-[#26343f] font-[Roboto,'Liberation_Sans',sans-serif]">
        <div className="flex items-center w-[208px] h-full pl-1">
            <Grip />
            <button aria-label="Play" className="ml-3 w-[7px]"><svg viewBox="0 0 7 12" className="w-[7px] h-3"><path d="M0 0l7 6-7 6z" fill="#14a81c" /></svg></button>
            <button aria-label="Step" className="ml-[21px] w-[11px]"><svg viewBox="0 0 11 12" className="w-[11px] h-3"><path d="M0 0h2v12H0zM4 0l7 6-7 6z" fill="#1c62b4" /></svg></button>
            <button aria-label="Pause" className="ml-[19px] w-[7px]"><svg viewBox="0 0 7 12" className="w-[7px] h-3"><path d="M0 0h2.500v12H0zM4.500 0H7v12H4.500z" fill="#1c62b4" /></svg></button>
            <button aria-label="Stop" className="ml-[21px] w-[10px] h-[10px] shrink-0 bg-[#1459b8]" />
            <div className="ml-[15px] w-px h-3 bg-[#a3b5c5]" />
            <svg viewBox="0 0 12 12" className="ml-[10px] w-[11px] h-[11px] shrink-0"><circle cx="6" cy="6" r="6" fill="#1b9422" /><path d="M6 2v1.500M6 5v5M4.500 9.500h3M4.500 5.500H6" stroke="#fff" strokeWidth="1.500" /></svg>
            <span className="ml-[5px] whitespace-nowrap">2 Message(s)</span>
        </div>
        <div className="flex items-center flex-1 h-full pl-[5px]">
            <Grip />
            <span className="ml-[5px] text-[#23513c] whitespace-nowrap">ANIMATING: 00:04:34.300000 (CPU load 0%)</span>
        </div>
        <div className="flex items-center justify-end w-[740px] h-full border-l border-[#a3b9cc]">
            <div className="w-[6px] h-full border-r border-[#a3b9cc]" />
            <span className="ml-auto w-[26px] text-right">-160.0</span>
            <span className="w-[354px] text-right">+1610.0</span>
            <span className="w-[20px] text-right pr-0.5 text-[#20308c]">th</span>
        </div>
    </footer>
)

export default function App() {
    return (
        <div className="flex flex-col h-screen overflow-hidden bg-[#b9d6ec] font-['Open_Sans','Noto_Sans',sans-serif]">
            <TitleBar />
            <nav className="flex items-center gap-[11px] h-[15px] pl-[5px] shrink-0 bg-[#f3f4f6] text-[10px] leading-4 text-[#24282d]">
                {menus.map(m => <button key={m}>{m}</button>)}
            </nav>
            <div className="flex gap-[6px] h-[22px] pl-[3px] shrink-0 bg-[#e4eef7]">
                {bars.map((b, i) => <ToolStrip key={i} {...b} />)}
            </div>
            <div className="flex items-end h-[23px] shrink-0 bg-[#e2ecf5] border-b border-[#8fb0cf] font-[Roboto,'Liberation_Sans',sans-serif]">
                <Tab icon="home" title="Home Page" />
                <Tab icon="schematic" title="Schematic Capture" active />
            </div>
            <div className="flex flex-1 min-h-0 pt-[5px]">
                <ModeBar />
                <div className="w-px" />
                <DevicePanel />
                <Sheet />
            </div>
            <StatusBar />
        </div>
    )
}
